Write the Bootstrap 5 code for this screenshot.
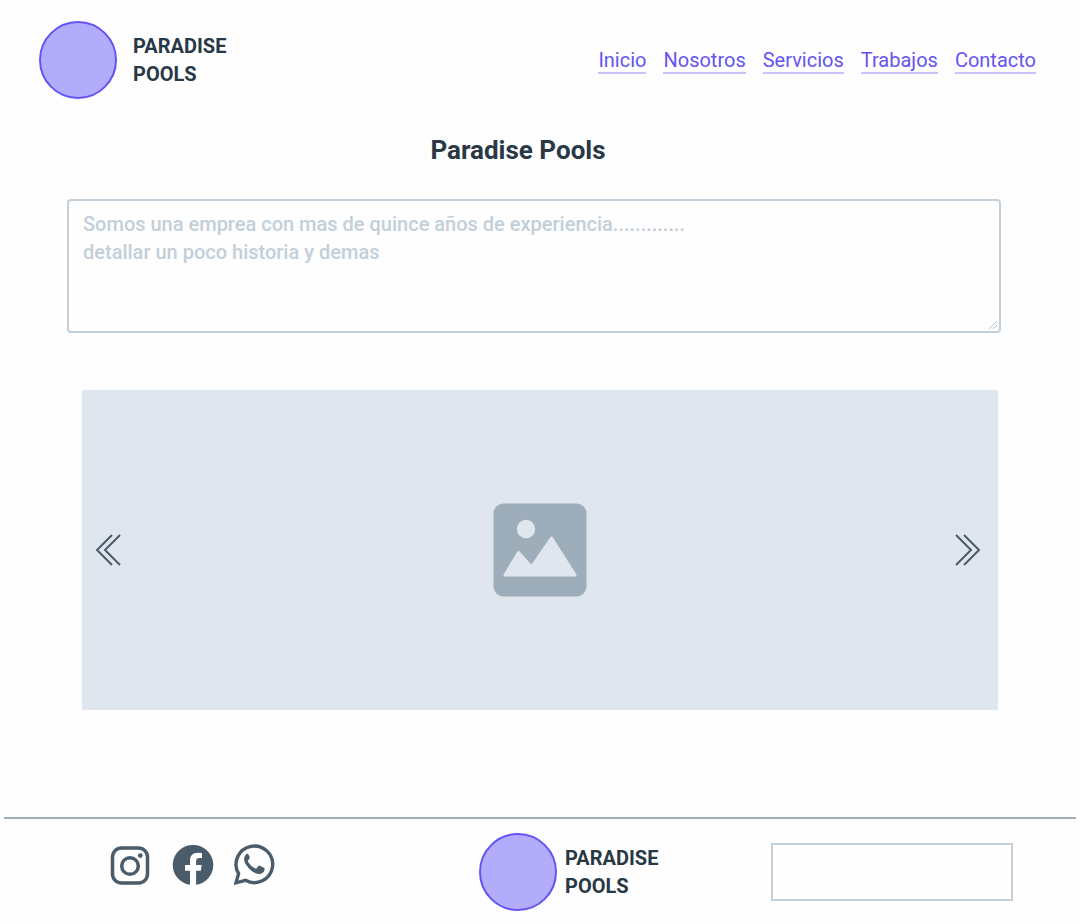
<!DOCTYPE html>
<html lang="es">
<head>
<meta charset="utf-8">
<meta name="viewport" content="width=device-width, initial-scale=1">
<title>Paradise Pools</title>
<link href="https://cdn.jsdelivr.net/npm/bootstrap@5.3.0/dist/css/bootstrap.min.css" rel="stylesheet">
<style>
  body { font-family: Roboto, "Liberation Sans", sans-serif; font-size: 20px; line-height: 28px; color: #293845; background: #fefefe; }
  .site-header { padding: 21px 44px 21px 39px; }
  .logo-dot { width: 78px; height: 78px; background: #b2acfa; border: 2px solid #6554f2; border-radius: 50%; flex: none; }
  .brand-name { width: 100px; }
  .site-nav { gap: 17px; }
  .site-nav .nav-link { padding: 2px 0 0; color: #6554f2; font-size: 20px; line-height: 24px; border-bottom: 2px solid #c9c3fc; }
  .site-title { font-size: 26px; line-height: 32px; padding: 14px 44px 0 0; margin-bottom: 33px; }
  .about { padding: 0 79px 0 67px; }
  .about .form-control { height: 134px; padding: 9px 14px; font-size: 20px; line-height: 28px; font-weight: 500; border: 2px solid #c3cfd9; border-radius: 4px; background: #fefefe; }
  .about .form-control::placeholder { color: #c3cfd9; opacity: 1; }
  .about .form-control::-webkit-resizer { background: url("data:image/svg+xml,%3Csvg xmlns='http://www.w3.org/2000/svg' width='15' height='15'%3E%3Cpath d='M5 13l8-8M9 13l4-4' stroke='%23b4c2ce'/%3E%3C/svg%3E") no-repeat right bottom; }
  .gallery { margin: 57px 82px 107px; height: 320px; padding: 0 12px; background: #dfe6ee; }
  .arrow { padding: 0; line-height: 0; border: 0; }
  .site-footer { margin: 0 4px; padding: 14px 63px 13px 106px; border-top: 2px solid #9eadba; display: grid; grid-template-columns: 369fr 292fr 242fr; }
  .social { gap: 20px; color: #4a5b6a; padding-top: 10px; }
  .social a { color: inherit; line-height: 0; }
  .social svg { fill: currentColor; }
  .footer-field { height: 58px; border: 2px solid #c3cfd9; background: #fefefe; margin-top: 10px; }
</style>
</head>
<body>
<header class="site-header d-flex align-items-center justify-content-between">
  <div class="d-flex align-items-center gap-3">
    <span class="logo-dot"></span>
    <span class="brand-name fw-bold">PARADISE POOLS</span>
  </div>
  <nav class="site-nav nav" aria-label="Principal">
    <a class="nav-link" href="#inicio">Inicio</a>
    <a class="nav-link" href="#nosotros">Nosotros</a>
    <a class="nav-link" href="#servicios">Servicios</a>
    <a class="nav-link" href="#trabajos">Trabajos</a>
    <a class="nav-link" href="#contacto">Contacto</a>
  </nav>
</header>
<main>
  <h1 class="site-title fw-bold text-center">Paradise Pools</h1>
  <div class="about">
    <textarea class="form-control d-block" aria-label="Historia" placeholder="Somos una emprea con mas de quince años de experiencia.............&#10;detallar un poco historia y demas"></textarea>
  </div>
  <section class="gallery d-flex align-items-center justify-content-between" aria-label="Trabajos">
    <button class="arrow btn" type="button" aria-label="Anterior">
      <svg width="32" height="32" fill="none" stroke="#4a5b6a" stroke-width="2"><path d="M18 1L3 16l15 15M26 1L11 16l15 15"/></svg>
    </button>
    <svg width="94" height="94" viewBox="0 0 94 94" aria-hidden="true">
      <rect x=".5" y=".5" width="93" height="93" rx="10" fill="#9eadba"/>
      <circle cx="33" cy="26" r="9.2" fill="#dfe6ee"/>
      <path d="M12 72L25.500 49.500L38.500 64L58.500 35L82 72Z" fill="#dfe6ee" stroke="#dfe6ee" stroke-width="3" stroke-linejoin="round"/>
    </svg>
    <button class="arrow btn" type="button" aria-label="Siguiente">
      <svg width="32" height="32" fill="none" stroke="#4a5b6a" stroke-width="2"><path d="M2 1l15 15L2 31M10 1l15 15-15 15"/></svg>
    </button>
  </section>
</main>
<footer class="site-footer">
  <div class="social d-flex">
    <a href="#instagram" aria-label="Instagram"><svg width="42" height="44" viewBox="0 0 42 44"><rect x="2.500" y="5" width="35" height="35" rx="9" fill="none" stroke="currentColor" stroke-width="3.500"/><circle cx="20" cy="23" r="8.300" fill="none" stroke="currentColor" stroke-width="3.500"/><circle cx="30.300" cy="12.600" r="2.400"/></svg></a>
    <a href="#facebook" aria-label="Facebook"><svg width="42" height="44" viewBox="0 0 42 44"><path d="M21 2A20 20 0 0 0 18 41.800V27.800H13V22H18V17.600C18 12.600 21 9.800 25.500 9.800C27.600 9.800 30 10.200 30 10.200V15H27.400C24.900 15 24.100 16.600 24.100 18.200V22H29.700L28.800 27.800H24.100V41.800A20 20 0 0 0 21 2Z"/></svg></a>
    <a href="#whatsapp" aria-label="WhatsApp"><svg width="42" height="44" viewBox="1 0 42 44"><path d="M3 39.800L5.600 30.600A18.300 18.300 0 1 1 12.500 37.300Z" fill="none" stroke="currentColor" stroke-width="3.400"/><path d="M15 11.800C14.400 11.700 13.500 11.900 12.900 12.600C12.200 13.300 10.700 14.800 10.700 17.600C10.700 20.500 12.800 23.300 13.100 23.700C13.400 24.100 17.200 30 23.100 32.300C28 34.200 29 33.700 30 33.500C31.300 33.300 33.900 32 34.400 30.500C34.900 29 34.900 27.800 34.800 27.500C34.600 27.200 34.100 27.100 33.400 26.700L29 24.600C28.400 24.400 28 24.300 27.500 25L25.500 27.400C25.100 27.900 24.700 27.900 24 27.600C23.300 27.300 20.900 26.500 18.700 24.500C16.900 22.900 15.700 20.900 15.300 20.200C15 19.600 15.300 19.200 15.600 18.800L17.200 16.700C17.500 16.200 17.400 15.800 17.200 15.400L15.900 12.500C15.700 12 15.400 11.800 15 11.800Z" transform="translate(2 0) scale(.85 .92)"/></svg></a>
  </div>
  <div class="d-flex align-items-center gap-2">
    <span class="logo-dot"></span>
    <span class="brand-name fw-bold">PARADISE POOLS</span>
  </div>
  <input class="footer-field w-100" type="text" aria-label="Mensaje">
</footer>
<script src="https://cdn.jsdelivr.net/npm/bootstrap@5.3.0/dist/js/bootstrap.bundle.min.js"></script>
</body>
</html>
